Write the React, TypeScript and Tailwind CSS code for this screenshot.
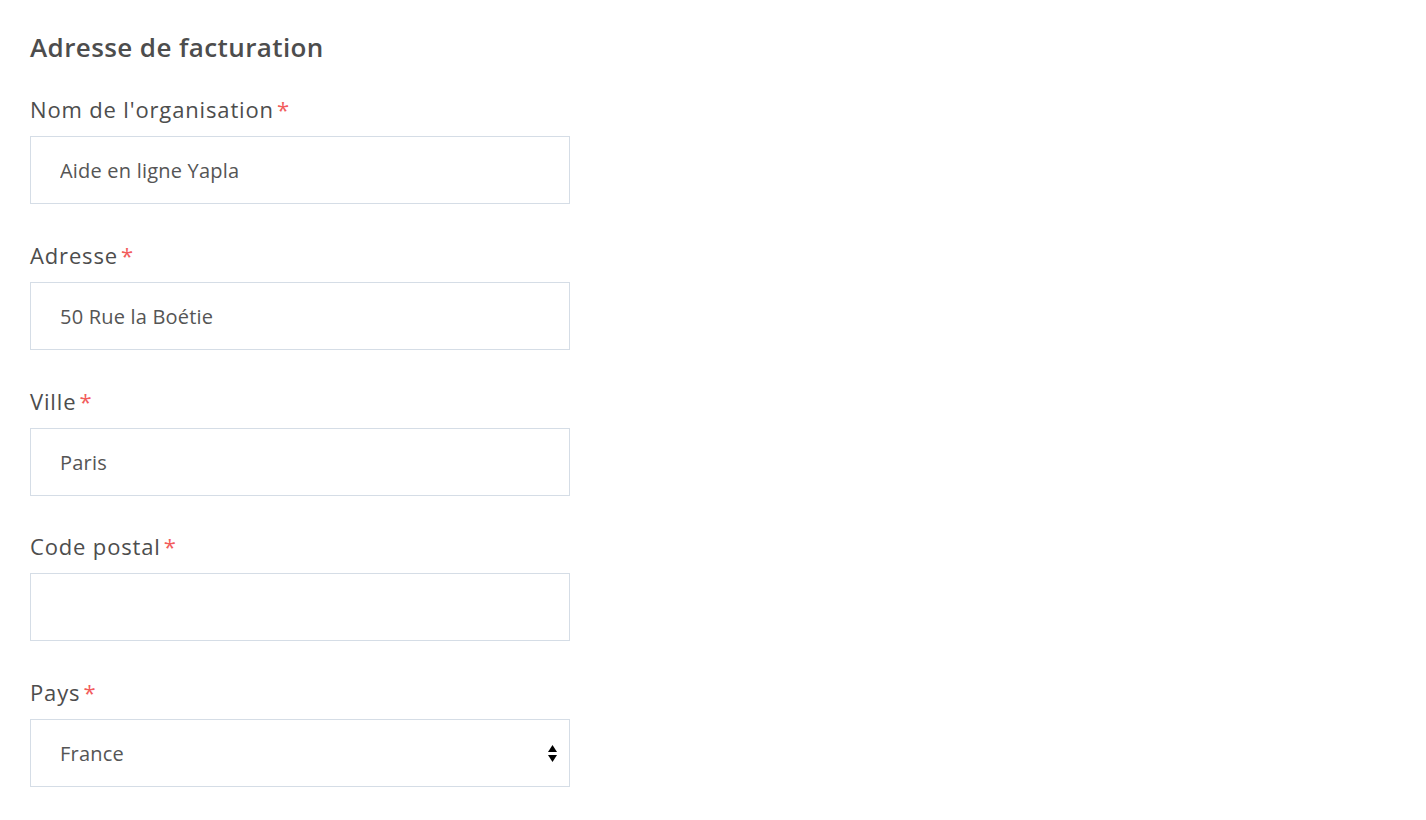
const fields = [
  { label: "Nom de l'organisation", value: 'Aide en ligne Yapla' },
  { label: 'Adresse', value: '50 Rue la Boétie' },
  { label: 'Ville', value: 'Paris' },
  { label: 'Code postal', value: '' },
];

function Label({ text }: { text: string }) {
  return (
    <label className="block h-[30px] text-[22px] leading-[28px] font-medium tracking-[0.85px] text-[#4d4d4d]">
      {text}
      <span className="ml-[3px] text-[#f25c5c]">*</span>
    </label>
  );
}

export default function App() {
  return (
    <div className="min-h-screen bg-white font-['Open_Sans','Noto_Sans',sans-serif]">
      <div className="w-[540px] pl-[30px] pt-[30px] box-content">
        <h2 className="text-[26px] leading-[34px] font-semibold tracking-[0.4px] text-[#4d4d4d]">Adresse de facturation</h2>
        <div className="mt-[31px] flex flex-col gap-[36.75px]">
          {fields.map((f) => (
            <div key={f.label}>
              <Label text={f.label} />
              <input
                type="text"
                defaultValue={f.value}
                className="mt-[11px] block h-[68px] w-full border border-[#d5dde6] bg-white px-[29px] pt-[1px] text-[20px] tracking-[0.2px] text-[#555] outline-none"
              />
            </div>
          ))}
          <div>
            <Label text="Pays" />
            <div className="relative mt-[11px] flex h-[68px] w-full items-center border border-[#d5dde6] bg-white px-[29px] pt-[1px] text-[20px] tracking-[0.2px] text-[#555]">
              France
              <svg className="absolute right-[12px] top-[25px]" width="9" height="17" viewBox="0 0 9 17">
                <path d="M4.5 0 L9 7 L0 7 Z" fill="#000" />
                <path d="M0 10 L9 10 L4.5 17 Z" fill="#000" />
              </svg>
            </div>
          </div>
        </div>
      </div>
    </div>
  );
}
